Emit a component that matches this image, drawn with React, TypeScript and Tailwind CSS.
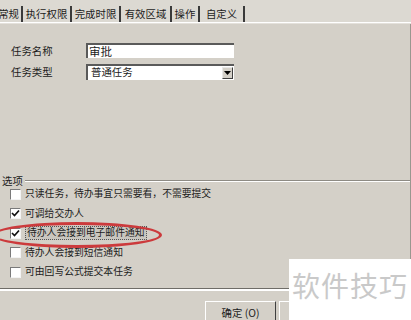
const tabs = [
  { t: "常规", w: "w-[23px]" },
  { t: "执行权限", w: "w-[49px]" },
  { t: "完成时限", w: "w-[49px]" },
  { t: "有效区域", w: "w-[51px]" },
  { t: "操作", w: "w-[28px]" },
  { t: "自定义", w: "w-[45px]" },
];

const options = [
  { label: "只读任务，待办事宜只需要看，不需要提交", checked: false },
  { label: "可调给交办人", checked: true },
  { label: "待办人会接到电子邮件通知", checked: true, focused: true },
  { label: "待办人会接到短信通知", checked: false },
  { label: "可由回写公式提交本任务", checked: false },
];

const Check = ({ checked }: { checked: boolean }) => (
  <span className="flex h-[11px] w-[11px] items-center justify-center border border-[#7a7a7a] border-r-[#f4f4f4] border-b-[#f4f4f4] bg-white">
    {checked && (
      <svg width="9" height="9" viewBox="0 0 9 9">
        <path d="M1 4 L3.5 6.5 L8 1.5" stroke="#111" strokeWidth="1.7" fill="none" />
      </svg>
    )}
  </span>
);

export default function App() {
  return (
    <div
      className="relative h-[320px] w-[411px] overflow-hidden bg-[#d4d0c8] text-[10.4px] text-[#1c1c1c]"
      style={{ fontFamily: '"Noto Sans CJK SC", "Liberation Sans", sans-serif' }}
    >
      {/* tab strip */}
      <div className="flex h-[22px] items-end bg-[#dcd9d2]">
        {tabs.map((tab, i) => (
          <div
            key={tab.t}
            className={
              "flex h-[16px] shrink-0 items-center overflow-hidden border-r-2 border-[#3a3a3a] leading-none whitespace-nowrap " +
              tab.w +
              (i === 0 ? " justify-end pr-[2px]" : " justify-center")
            }
          >
            {tab.t}
          </div>
        ))}
      </div>
      <div className="h-[2px] border-t border-white bg-[#e4e1db]" />

      <div className="flex h-[296px] flex-col border-r border-[#9a978f]">
        {/* fields */}
        <div className="flex flex-col gap-[5px] pt-[19px] pl-[11px]">
          <div className="flex items-center">
            <span className="w-[75px]">任务名称</span>
            <div className="flex h-[15px] w-[148px] items-center border-t-2 border-l-2 border-[#5a5a5a] bg-white pl-[1px] text-[11.5px] leading-none">
              审批
            </div>
          </div>
          <div className="flex items-center">
            <span className="w-[75px]">任务类型</span>
            <div className="flex h-[16px] w-[148px] items-center border-t-2 border-l-2 border-[#5a5a5a] bg-white pl-[3px] leading-none">
              <span className="flex-1">普通任务</span>
              <span className="mr-[1px] flex h-[12px] w-[11px] items-center justify-center border border-[#e8e8e8] border-r-[#404040] border-b-[#404040] bg-[#d4d0c8]">
                <svg width="7" height="4" viewBox="0 0 7 4">
                  <path d="M0 0 H7 L3.5 4 Z" fill="#000" />
                </svg>
              </span>
            </div>
          </div>
        </div>

        {/* group box */}
        <div className="mt-[96px] flex h-[12px] items-center">
          <span className="px-[2px] leading-none">选项</span>
          <div className="h-[2px] flex-1 border-t border-[#8e8b84] border-b border-b-white" />
        </div>
        <div className="flex flex-col gap-[5.5px] pt-[1px] pl-[10px] text-[9.8px]">
          {options.map((o) => (
            <div key={o.label} className="flex h-[14px] items-center gap-[4px]">
              <Check checked={o.checked} />
              <span
                className={
                  "leading-none " +
                  (o.focused ? "border border-dotted border-[#555] bg-[#c9c6bf] px-[1px] py-[1px]" : "")
                }
              >
                {o.label}
              </span>
            </div>
          ))}
        </div>

        {/* bottom separator */}
        <div className="mt-[9px] h-[3px] border-t border-[#6f6d68] border-b-2 border-b-white" />

        <div className="flex gap-[3px] pt-[10px] pl-[205px]">
          <div className="flex h-[24px] w-[71px] items-center justify-center border border-white border-r-[#404040] border-b-[#404040] leading-none">
            确定 (O)
          </div>
          <div className="h-[24px] w-[71px] border border-white border-r-[#404040]" />
        </div>
      </div>

      {/* red ellipse */}
      <div className="absolute top-[222px] left-[-8px] h-[26px] w-[170px] rounded-[50%] border-[3px] border-[#cc3a3c]" />

      {/* watermark */}
      <div className="absolute top-[259px] left-[289px] flex h-[61px] w-[122px] items-start bg-white pt-[12px] pl-[3px]">
        <span className="text-[28px] leading-none tracking-[1px] text-[#c9c9c9]">软件技巧</span>
      </div>
    </div>
  );
}
